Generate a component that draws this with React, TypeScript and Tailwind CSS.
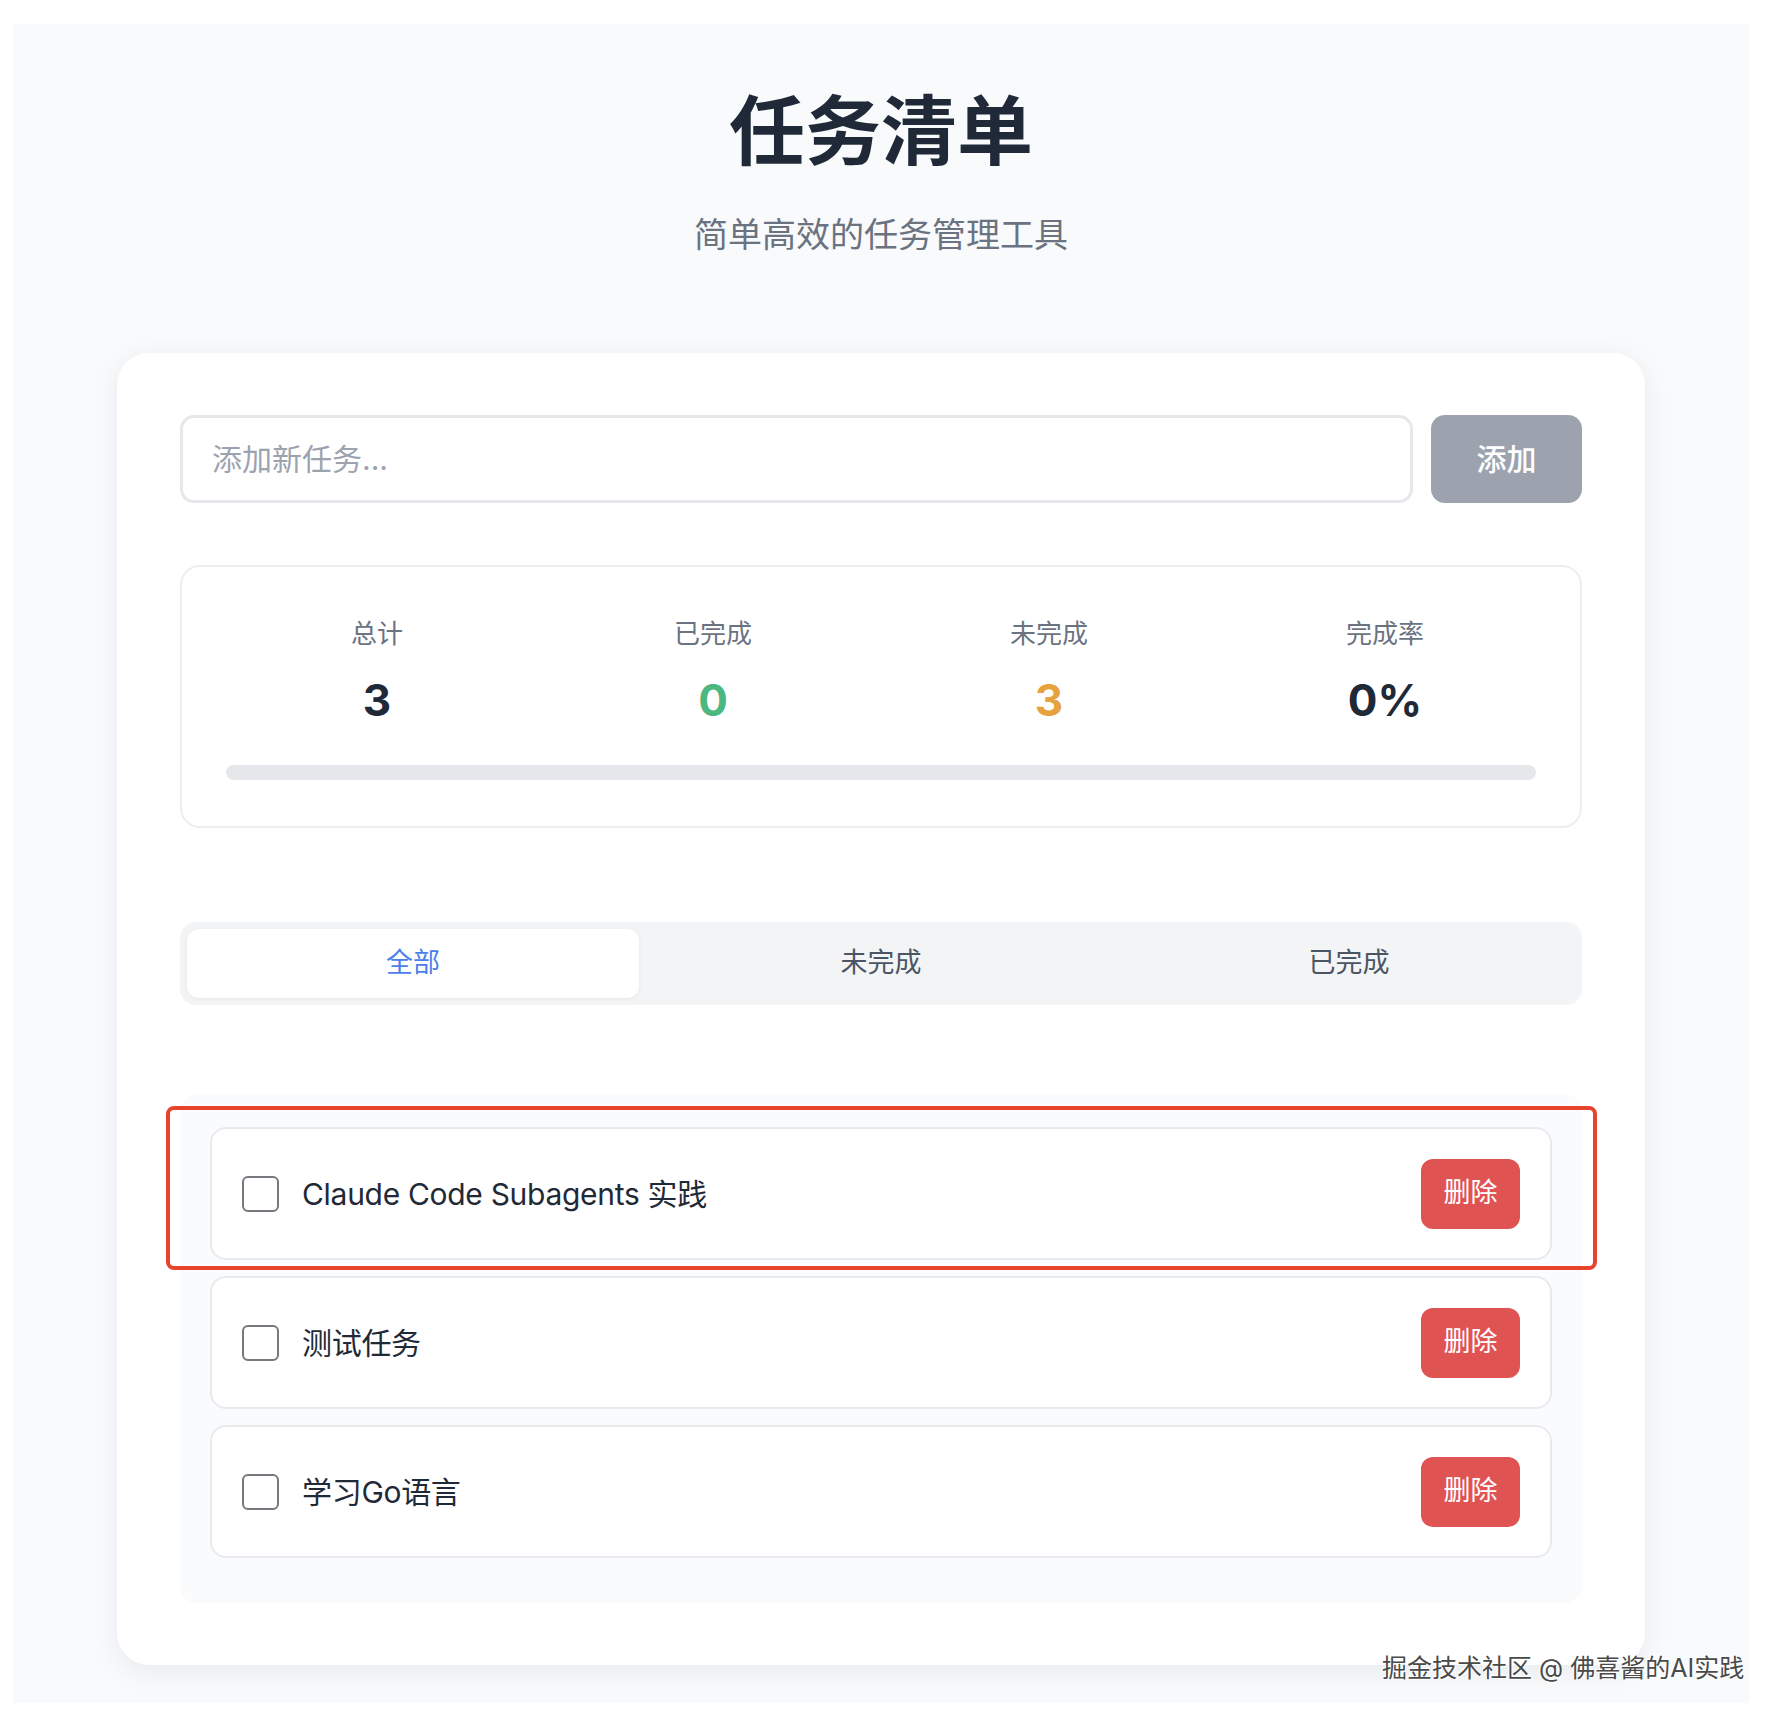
import React from "react";

const FONT = { fontFamily: '"Inter", "Noto Sans CJK SC", sans-serif' };

const tasks = ["Claude Code Subagents 实践", "测试任务", "学习Go语言"];

function Stat({ label, value, color }: { label: string; value: string; color: string }) {
  return (
    <div className="flex flex-col items-center">
      <div className="text-[26px] leading-[36px] text-[#6b7280]">{label}</div>
      <div className={`mt-[20px] text-[44px] leading-[56px] font-bold ${color}`}>{value}</div>
    </div>
  );
}

function TaskItem({ text }: { text: string }) {
  return (
    <div className="flex h-[133px] items-center rounded-[16px] border-2 border-[#e8eaee] bg-white px-[30px]">
      <div className="h-[36px] w-[37px] shrink-0 rounded-[6px] border-2 border-[#75787d] bg-white" />
      <div className="ml-[23px] flex-1 text-[30px] leading-[40px] tracking-[-0.3px] text-[#1f2937]">{text}</div>
      <button className="flex h-[70px] w-[99px] items-center justify-center rounded-[12px] bg-[#e05353] text-[27px] text-white">
        删除
      </button>
    </div>
  );
}

export default function App() {
  return (
    <div className="relative h-[1722px] w-[1782px] overflow-hidden bg-white" style={FONT}>
      <div className="ml-[13px] mt-[24px] h-[1679px] w-[1736px] bg-[#f8fafc] pt-[63px]">
        <h1 className="text-center text-[76px] leading-[88px] font-bold text-[#1f2937]">任务清单</h1>
        <p className="mt-[36px] text-center text-[34px] leading-[48px] text-[#6b7280]">简单高效的任务管理工具</p>

        <div className="ml-[104px] mt-[94px] w-[1528px] rounded-[32px] bg-white px-[63px] pt-[62px] pb-[62px] shadow-[0_6px_28px_rgba(15,23,42,0.07)]">
          {/* input row */}
          <div className="flex gap-[18px]">
            <div className="flex h-[88px] flex-1 items-center rounded-[14px] border-[3px] border-[#e5e7eb] px-[29px] text-[30px] text-[#9ca3af]">
              添加新任务...
            </div>
            <button className="flex h-[88px] w-[151px] items-center justify-center rounded-[14px] bg-[#9ca3af] text-[30px] font-medium text-white">
              添加
            </button>
          </div>

          {/* stats */}
          <div className="mt-[62px] h-[263px] rounded-[20px] border-2 border-[#eceef1] px-[27px] pt-[49px]">
            <div className="grid grid-cols-4">
              <Stat label="总计" value="3" color="text-[#1f2937]" />
              <Stat label="已完成" value="0" color="text-[#4bb880]" />
              <Stat label="未完成" value="3" color="text-[#e6a23c]" />
              <Stat label="完成率" value="0%" color="text-[#1f2937]" />
            </div>
            <div className="mx-[17px] mt-[37px] h-[15px] rounded-full bg-[#e5e7eb]" />
          </div>

          {/* tabs */}
          <div className="mt-[94px] grid h-[83px] grid-cols-3 gap-[16px] rounded-[16px] bg-[#f3f4f6] p-[7px]">
            <div className="flex items-center justify-center rounded-[12px] bg-white text-[27px] text-[#4a80ec] shadow-[0_1px_4px_rgba(0,0,0,0.06)]">
              全部
            </div>
            <div className="flex items-center justify-center text-[27px] text-[#4b5563]">未完成</div>
            <div className="flex items-center justify-center text-[27px] text-[#4b5563]">已完成</div>
          </div>

          {/* list */}
          <div className="relative mt-[90px] rounded-[16px] bg-[#fafbfc] px-[30px] pt-[32px] pb-[45px]">
            <div className="flex flex-col gap-[16px]">
              {tasks.map((t) => (
                <TaskItem key={t} text={t} />
              ))}
            </div>
            <div className="pointer-events-none absolute left-[-14px] top-[11px] h-[164px] w-[1431px] rounded-[8px] border-4 border-[#e8432d]" />
          </div>
        </div>
      </div>

      <div
        className="absolute left-[1382px] top-[1648px] text-[25px] leading-[40px] text-[#4a4a4a]"
        style={{ textShadow: "0 0 2px #fff, 1px 1px 0 #fff, -1px -1px 0 #fff" }}
      >
        掘金技术社区 @ 佛喜酱的AI实践
      </div>
    </div>
  );
}
